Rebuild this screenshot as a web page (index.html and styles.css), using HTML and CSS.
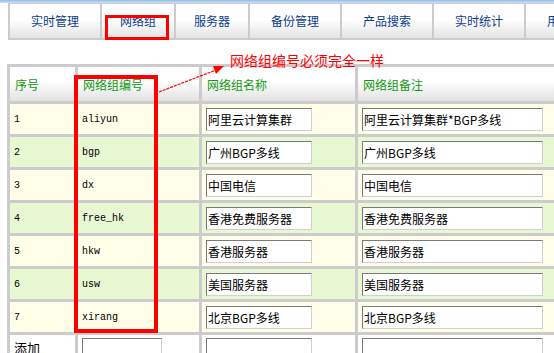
FILE: index.html
```html
<!DOCTYPE html>
<html lang="zh-CN">
<head>
    <meta charset="UTF-8">
    <title>网络组</title>
    <link rel="stylesheet" href="styles.css">
</head>
<body>
    <div class="topline"></div>
    <div class="page">
        <nav class="tabs">
            <div class="tab tab-wide">实时管理</div>
            <div class="tab tab-short">网络组</div>
            <div class="tab tab-short">服务器</div>
            <div class="tab tab-wide">备份管理</div>
            <div class="tab tab-wide">产品搜索</div>
            <div class="tab tab-wide">实时统计</div>
            <div class="tab tab-wide">用户管理</div>
        </nav>

        <table class="groups">
            <colgroup>
                <col class="col-no">
                <col class="col-code">
                <col class="col-name">
                <col class="col-remark">
            </colgroup>
            <thead>
                <tr>
                    <th>序号</th>
                    <th>网络组编号</th>
                    <th>网络组名称</th>
                    <th>网络组备注</th>
                </tr>
            </thead>
            <tbody>
                <tr class="odd">
                    <td class="num">1</td>
                    <td class="code">aliyun</td>
                    <td><input class="field-name" type="text" value="阿里云计算集群"></td>
                    <td><input class="field-remark" type="text" value="阿里云计算集群*BGP多线"></td>
                </tr>
                <tr class="even">
                    <td class="num">2</td>
                    <td class="code">bgp</td>
                    <td><input class="field-name" type="text" value="广州BGP多线"></td>
                    <td><input class="field-remark" type="text" value="广州BGP多线"></td>
                </tr>
                <tr class="odd">
                    <td class="num">3</td>
                    <td class="code">dx</td>
                    <td><input class="field-name" type="text" value="中国电信"></td>
                    <td><input class="field-remark" type="text" value="中国电信"></td>
                </tr>
                <tr class="even">
                    <td class="num">4</td>
                    <td class="code">free_hk</td>
                    <td><input class="field-name" type="text" value="香港免费服务器"></td>
                    <td><input class="field-remark" type="text" value="香港免费服务器"></td>
                </tr>
                <tr class="odd">
                    <td class="num">5</td>
                    <td class="code">hkw</td>
                    <td><input class="field-name" type="text" value="香港服务器"></td>
                    <td><input class="field-remark" type="text" value="香港服务器"></td>
                </tr>
                <tr class="even">
                    <td class="num">6</td>
                    <td class="code">usw</td>
                    <td><input class="field-name" type="text" value="美国服务器"></td>
                    <td><input class="field-remark" type="text" value="美国服务器"></td>
                </tr>
                <tr class="odd">
                    <td class="num">7</td>
                    <td class="code">xirang</td>
                    <td><input class="field-name" type="text" value="北京BGP多线"></td>
                    <td><input class="field-remark" type="text" value="北京BGP多线"></td>
                </tr>
                <tr class="add">
                    <td class="label">添加</td>
                    <td><input class="field-code" type="text"></td>
                    <td><input class="field-name" type="text"></td>
                    <td><input class="field-remark" type="text"></td>
                </tr>
            </tbody>
        </table>

        <!-- annotations drawn over the screenshot -->
        <div class="mark mark-tab"></div>
        <div class="mark mark-col"></div>
        <div class="note">网络组编号必须完全一样</div>
        <svg class="arrow" width="554" height="353" viewBox="0 0 554 353">
            <line x1="159" y1="89" x2="216" y2="67" stroke="#ff0000" stroke-width="1.2" stroke-dasharray="3 1"/>
            <polygon points="224,63 213,63 216,71" fill="#ff0000"/>
        </svg>
    </div>
</body>
</html>
```

FILE: styles.css
```css
html, body {
    margin: 0;
    padding: 0;
    overflow: hidden;
}

body {
    font-family: "Noto Sans CJK SC", "Liberation Sans", sans-serif;
    font-size: 12px;
    background-color: #fff;
    color: #000;
}

.topline {
    height: 3px;
    background: linear-gradient(to bottom, #8dbbe6, #cfe4f6);
}

.page {
    position: relative;
    height: 350px;
}

.tabs {
    display: flex;
    gap: 2px;
    margin-left: 8px;
    padding: 1px 2px 2px 2px;
    background-color: #cccccc;
    width: 700px;
}

.tab {
    flex: none;
    height: 34px;
    line-height: 34px;
    text-align: center;
    color: #0c3c8f;
    background: linear-gradient(to bottom, #ffffff 0%, #ffffff 45%, #e4e4e4 100%);
}

.tab-wide {
    width: 90px;
}

.tab-short {
    width: 72px;
}

.groups {
    margin: 24px 0 0 7px;
    border-spacing: 3px;
    background-color: #cccccc;
    table-layout: fixed;
    width: 554px;
}

.col-no { width: 65px; }
.col-code { width: 121px; }
.col-name { width: 153px; }
.col-remark { width: 200px; }

.groups th {
    height: 34px;
    padding: 0 5px;
    text-align: left;
    font-weight: normal;
    color: #119911;
    background: linear-gradient(to bottom, #ffffff 0%, #ffffff 40%, #e2e2e2 100%);
}

.groups td {
    height: 30px;
    padding: 0 4px;
    vertical-align: middle;
    white-space: nowrap;
    overflow: hidden;
}

.odd td {
    background-color: #fefee9;
}

.even td {
    background-color: #e8f8d3;
}

.add td {
    background-color: #ffffff;
    vertical-align: top;
    padding-top: 3px;
}

.num, .code {
    font-family: "Liberation Mono", "DejaVu Sans Mono", monospace;
    font-size: 10px;
}

.num {
    padding-left: 3px;
}

.label {
    font-size: 13px;
    padding-left: 3px;
}

input {
    box-sizing: border-box;
    height: 23px;
    margin: 0;
    padding: 0 1px;
    font-family: "Noto Sans CJK SC", "Liberation Sans", sans-serif;
    font-size: 12px;
    color: #000;
    background-color: #fff;
    border: 1px solid;
    border-color: #7a7a7a #d0d0d0 #d0d0d0 #7a7a7a;
    outline: none;
}

.field-code { width: 80px; }
.field-name { width: 106px; }
.field-remark { width: 181px; }

.mark {
    position: absolute;
    box-sizing: border-box;
    border: 3px solid #ff0000;
}

.mark-tab {
    left: 105px;
    top: 12px;
    width: 64px;
    height: 25px;
}

.mark-col {
    left: 74px;
    top: 72px;
    width: 84px;
    height: 258px;
    border-width: 4px;
}

.note {
    position: absolute;
    left: 230px;
    top: 49px;
    font-size: 14px;
    line-height: 16px;
    color: #ff0000;
    white-space: nowrap;
}

.arrow {
    position: absolute;
    left: 0;
    top: 0;
    pointer-events: none;
}
```
